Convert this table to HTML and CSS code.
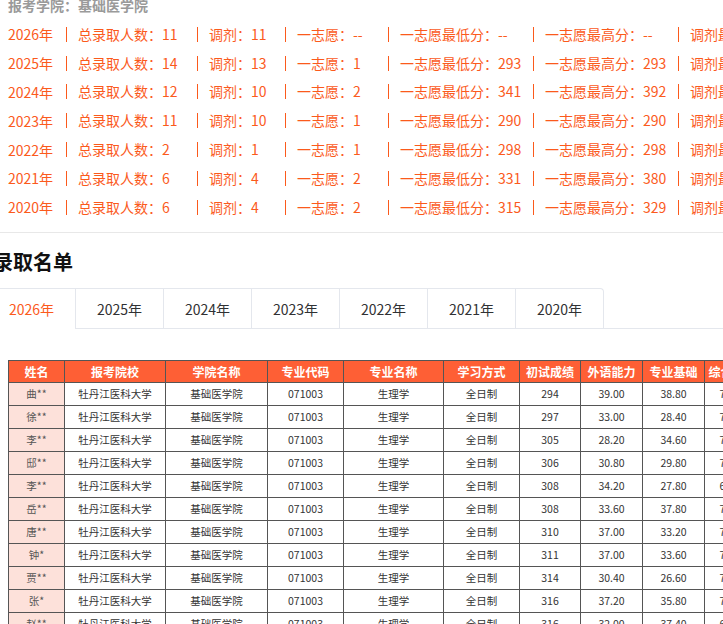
FILE: index.html
```html
<!DOCTYPE html>
<html lang="zh-CN">
<head>
<meta charset="utf-8">
<title>录取名单</title>
<link rel="stylesheet" href="styles.css">
</head>
<body>
<div class="page">
  <section class="stats">
    <div class="college">报考学院：基础医学院</div>
    <div class="row"><span class="year">2026年</span><span class="seg s1">总录取人数：11</span><span class="seg s2">调剂：11</span><span class="seg s3">一志愿：--</span><span class="seg s4">一志愿最低分：--</span><span class="seg s5">一志愿最高分：--</span><span class="seg s6">调剂最低分：--</span></div>
    <div class="row"><span class="year">2025年</span><span class="seg s1">总录取人数：14</span><span class="seg s2">调剂：13</span><span class="seg s3">一志愿：1</span><span class="seg s4">一志愿最低分：293</span><span class="seg s5">一志愿最高分：293</span><span class="seg s6">调剂最低分：294</span></div>
    <div class="row"><span class="year">2024年</span><span class="seg s1">总录取人数：12</span><span class="seg s2">调剂：10</span><span class="seg s3">一志愿：2</span><span class="seg s4">一志愿最低分：341</span><span class="seg s5">一志愿最高分：392</span><span class="seg s6">调剂最低分：300</span></div>
    <div class="row"><span class="year">2023年</span><span class="seg s1">总录取人数：11</span><span class="seg s2">调剂：10</span><span class="seg s3">一志愿：1</span><span class="seg s4">一志愿最低分：290</span><span class="seg s5">一志愿最高分：290</span><span class="seg s6">调剂最低分：295</span></div>
    <div class="row"><span class="year">2022年</span><span class="seg s1">总录取人数：2</span><span class="seg s2">调剂：1</span><span class="seg s3">一志愿：1</span><span class="seg s4">一志愿最低分：298</span><span class="seg s5">一志愿最高分：298</span><span class="seg s6">调剂最低分：302</span></div>
    <div class="row"><span class="year">2021年</span><span class="seg s1">总录取人数：6</span><span class="seg s2">调剂：4</span><span class="seg s3">一志愿：2</span><span class="seg s4">一志愿最低分：331</span><span class="seg s5">一志愿最高分：380</span><span class="seg s6">调剂最低分：310</span></div>
    <div class="row"><span class="year">2020年</span><span class="seg s1">总录取人数：6</span><span class="seg s2">调剂：4</span><span class="seg s3">一志愿：2</span><span class="seg s4">一志愿最低分：315</span><span class="seg s5">一志愿最高分：329</span><span class="seg s6">调剂最低分：305</span></div>
  </section>

  <h2 class="title">录取名单</h2>

  <div class="tabs">
    <div class="tab-nav">
      <div class="tab active">2026年</div>
      <div class="tab">2025年</div>
      <div class="tab">2024年</div>
      <div class="tab">2023年</div>
      <div class="tab">2022年</div>
      <div class="tab">2021年</div>
      <div class="tab">2020年</div>
    </div>
  </div>

  <div class="table-wrap">
    <table class="list">
      <thead>
        <tr>
          <th class="c-name">姓名</th><th class="c-school">报考院校</th><th class="c-college">学院名称</th><th class="c-code">专业代码</th><th class="c-major">专业名称</th><th class="c-mode">学习方式</th><th class="c-score">初试成绩</th><th class="c-lang">外语能力</th><th class="c-base">专业基础</th><th class="c-comp">综合能力</th>
        </tr>
      </thead>
      <tbody>
        <tr><td class="name">曲**</td><td>牡丹江医科大学</td><td>基础医学院</td><td>071003</td><td>生理学</td><td>全日制</td><td>294</td><td>39.00</td><td>38.80</td><td>72.40</td></tr>
        <tr><td class="name">徐**</td><td>牡丹江医科大学</td><td>基础医学院</td><td>071003</td><td>生理学</td><td>全日制</td><td>297</td><td>33.00</td><td>28.40</td><td>74.60</td></tr>
        <tr><td class="name">李**</td><td>牡丹江医科大学</td><td>基础医学院</td><td>071003</td><td>生理学</td><td>全日制</td><td>305</td><td>28.20</td><td>34.60</td><td>72.80</td></tr>
        <tr><td class="name">邸**</td><td>牡丹江医科大学</td><td>基础医学院</td><td>071003</td><td>生理学</td><td>全日制</td><td>306</td><td>30.80</td><td>29.80</td><td>75.20</td></tr>
        <tr><td class="name">李**</td><td>牡丹江医科大学</td><td>基础医学院</td><td>071003</td><td>生理学</td><td>全日制</td><td>308</td><td>34.20</td><td>27.80</td><td>68.40</td></tr>
        <tr><td class="name">岳**</td><td>牡丹江医科大学</td><td>基础医学院</td><td>071003</td><td>生理学</td><td>全日制</td><td>308</td><td>33.60</td><td>37.80</td><td>73.00</td></tr>
        <tr><td class="name">唐**</td><td>牡丹江医科大学</td><td>基础医学院</td><td>071003</td><td>生理学</td><td>全日制</td><td>310</td><td>37.00</td><td>33.20</td><td>72.20</td></tr>
        <tr><td class="name">钟*</td><td>牡丹江医科大学</td><td>基础医学院</td><td>071003</td><td>生理学</td><td>全日制</td><td>311</td><td>37.00</td><td>33.60</td><td>74.00</td></tr>
        <tr><td class="name">贾**</td><td>牡丹江医科大学</td><td>基础医学院</td><td>071003</td><td>生理学</td><td>全日制</td><td>314</td><td>30.40</td><td>26.60</td><td>72.60</td></tr>
        <tr><td class="name">张*</td><td>牡丹江医科大学</td><td>基础医学院</td><td>071003</td><td>生理学</td><td>全日制</td><td>316</td><td>37.20</td><td>35.80</td><td>73.40</td></tr>
        <tr><td class="name">赵**</td><td>牡丹江医科大学</td><td>基础医学院</td><td>071003</td><td>生理学</td><td>全日制</td><td>316</td><td>32.00</td><td>37.40</td><td>69.80</td></tr>
      </tbody>
    </table>
  </div>
</div>
</body>
</html>
```

FILE: styles.css
```css
html, body {
  margin: 0;
  padding: 0;
  overflow: hidden;
  background: #ffffff;
}

body {
  font-family: "Noto Sans CJK SC", "Noto Sans", sans-serif;
  color: #303133;
}

.page {
  padding-left: 8px;
  width: 723px;
  box-sizing: border-box;
  overflow: hidden;
}

/* ---------- stats ---------- */
.stats {
  margin-top: -9px;
  margin-left: -8px;
  padding-left: 8px;
  padding-bottom: 10px;
  border-bottom: 1px solid #e8e8e8;
}

.college {
  height: 29px;
  line-height: 29px;
  font-size: 14px;
  font-weight: bold;
  color: #9a9a9a;
}

.row {
  display: flex;
  align-items: center;
  height: 28.8px;
  font-size: 14px;
  color: #fb5a1c;
  white-space: nowrap;
}

.year {
  width: 58px;
  flex: none;
}

.seg {
  flex: none;
  box-sizing: border-box;
  border-left: 1px solid #fb5a1c;
  padding-left: 11px;
  height: 15px;
  line-height: 15px;
}

.s1 { width: 131px; }
.s2 { width: 88px; }
.s3 { width: 103px; }
.s4 { width: 145px; }
.s5 { width: 145px; }
.s6 { width: 145px; }

/* ---------- title ---------- */
.title {
  margin: 15px 0 12px -15px;
  font-size: 20px;
  line-height: 28px;
  font-weight: bold;
  color: #111111;
}

/* ---------- tabs ---------- */
.tabs {
  margin-left: -21px;
  border-bottom: 1px solid #e4e7ed;
  width: 760px;
}

.tab-nav {
  display: inline-flex;
  border: 1px solid #e4e7ed;
  border-bottom: none;
  border-radius: 0 4px 0 0;
  margin-bottom: -1px;
}

.tab {
  box-sizing: border-box;
  width: 88px;
  height: 40px;
  line-height: 40px;
  text-align: center;
  font-size: 14px;
  color: #303133;
  border-left: 1px solid #e4e7ed;
  border-bottom: 1px solid #e4e7ed;
}

.tab:first-child {
  border-left: none;
  width: 87px;
}

.tab.active {
  color: #fb5a1c;
  border-bottom-color: #ffffff;
}

/* ---------- table ---------- */
.table-wrap {
  margin-top: 31px;
}

.list {
  table-layout: fixed;
  border-collapse: collapse;
  width: 742px;
  border: 1px solid #222;
}

.list th,
.list td {
  border: 1px solid #555;
  text-align: center;
  padding: 0;
  white-space: nowrap;
  overflow: hidden;
}

.list th {
  height: 21px;
  background: #fe5f35;
  color: #ffffff;
  font-size: 12px;
  font-weight: bold;
}

.list td {
  height: 22px;
  font-size: 10.5px;
  color: #333333;
}

.list td.name {
  background: #fde1da;
  color: #555555;
}

.c-name { width: 55px; }
.c-school { width: 100px; }
.c-college { width: 101px; }
.c-code { width: 75px; }
.c-major { width: 99px; }
.c-mode { width: 75px; }
.c-score { width: 60px; }
.c-lang { width: 61px; }
.c-base { width: 61px; }
.c-comp { width: 55px; }
```
